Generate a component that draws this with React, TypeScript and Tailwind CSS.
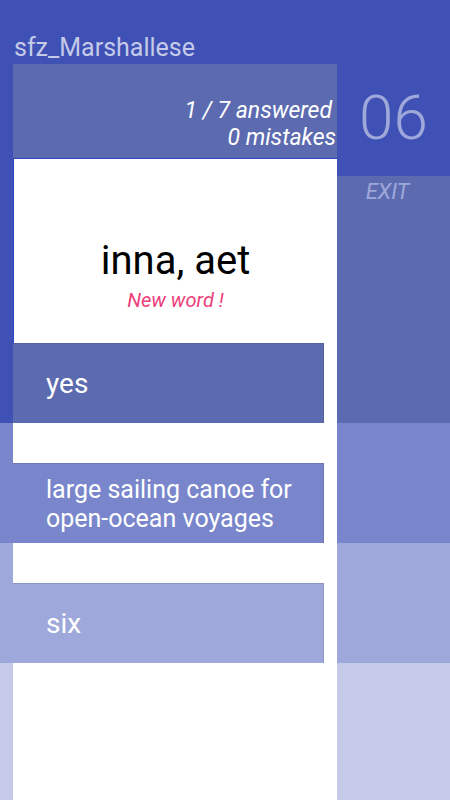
const answers = [
  { text: "yes", bg: "bg-[#5c6bb0]" },
  { text: "large sailing canoe for open-ocean voyages", bg: "bg-[#7986cb]" },
  { text: "six", bg: "bg-[#9fa8da]" },
];

export default function App() {
  return (
    <div className="flex h-[800px] w-[450px] flex-col overflow-hidden bg-[#3f51b5] font-['Roboto',sans-serif]">
      <div className="h-[64px] shrink-0 pl-[14px] pt-[33px] text-[25px] leading-[30px] text-[#c5cae9]">
        sfz_Marshallese
      </div>

      <div className="flex flex-1">
        {/* left strip */}
        <div className="flex w-[13px] flex-col">
          <div className="flex-1 bg-[#3f51b5]" />
          <div className="h-[120px] bg-[#7986cb]" />
          <div className="h-[120px] bg-[#9fa8da]" />
          <div className="h-[137px] bg-[#c5cae9]" />
        </div>

        {/* card */}
        <div className="flex w-[324px] flex-col bg-white">
          <div className="flex h-[94px] flex-col items-end justify-start bg-[#5c6bb0] pt-[33px] text-[23px] italic leading-[27px] text-white">
            <span className="pr-[5px]">1 / 7 answered</span>
            <span className="pr-px">0 mistakes</span>
          </div>
          <div className="flex h-[185px] flex-col items-center border-l border-t border-[#2f47c2] pt-[77px]">
            <div className="text-[40px] leading-[50px] text-black">inna, aet</div>
            <div className="mt-[2px] text-[20px] italic leading-[24px] text-[#ec407a]">New word !</div>
          </div>
          {answers.map((a) => (
            <div key={a.text} className="mb-[40px] w-[311px]">
              <div
                className={`flex h-[80px] items-center border-r border-t border-black/10 ${a.bg} pl-[33px] pr-[20px] text-white ${
                  a.text.length > 10 ? "text-[25px] leading-[29px]" : "text-[28px] leading-[32px]"
                }`}
              >
                {a.text}
              </div>
            </div>
          ))}
        </div>

        {/* right column */}
        <div className="flex flex-1 flex-col">
          <div className="flex h-[112px] items-center justify-center bg-[#3f51b5] pb-[4px] text-[62px] font-light leading-none text-[#9fa8da]">
            06
          </div>
          <div className="flex flex-1 justify-center bg-[#5c6bb0] pr-[12px] pt-[3px] text-[22px] italic leading-[26px] text-[#9fa8da]">
            EXIT
          </div>
          <div className="h-[120px] bg-[#7986cb]" />
          <div className="h-[120px] bg-[#9fa8da]" />
          <div className="h-[137px] bg-[#c5cae9]" />
        </div>
      </div>
    </div>
  );
}
